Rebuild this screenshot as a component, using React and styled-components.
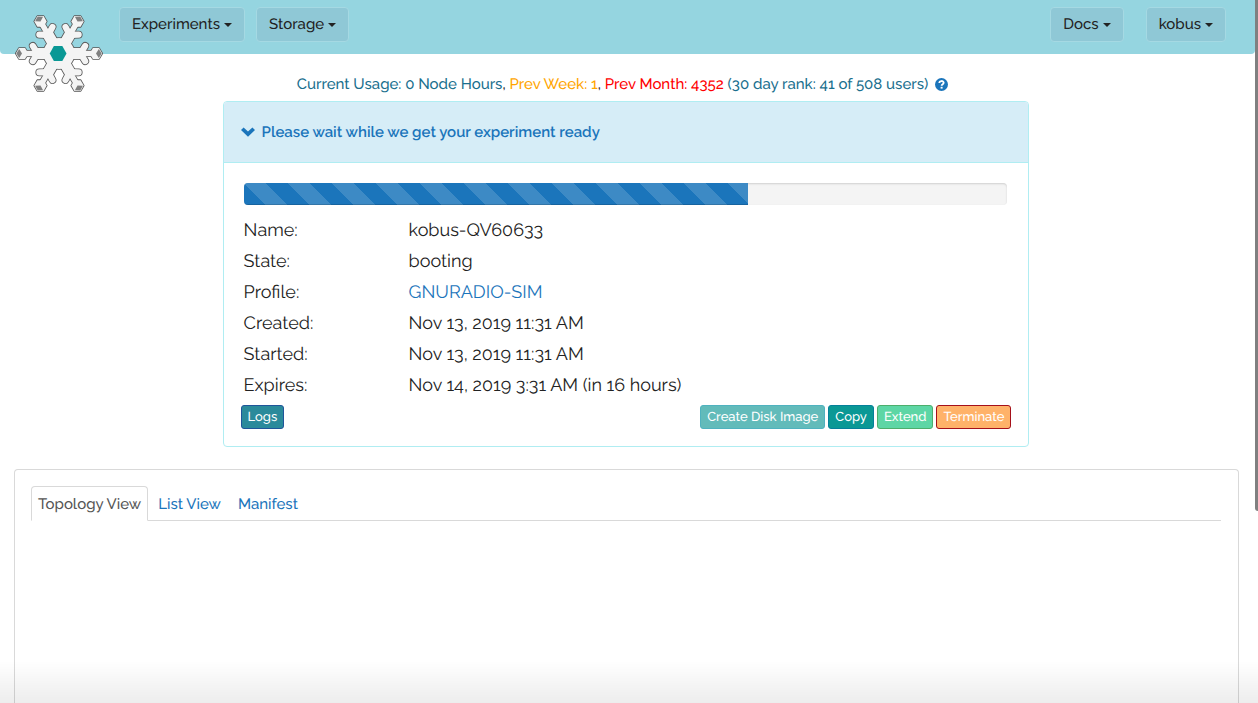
import React from "react";
import styled, { createGlobalStyle, css } from "styled-components";

const Global = createGlobalStyle`
  *, *::before, *::after { box-sizing: border-box; }
  body {
    margin: 0;
    background: #fff;
    color: #222;
    font-family: Raleway, Lato, "Open Sans", sans-serif;
    font-size: 15px;
    font-weight: 500;
    line-height: 22px;
    font-variant-numeric: oldstyle-nums;
    text-rendering: geometricPrecision;
  }
  a { color: #1b75bb; text-decoration: none; }
  button { font: inherit; text-rendering: inherit; cursor: pointer; }
`;

const Page = styled.div`
  min-height: 100vh;
  display: flex;
  flex-direction: column;
  padding-right: 3px;
`;

const Navbar = styled.nav`
  position: relative;
  display: flex;
  justify-content: space-between;
  height: 54px;
  padding: 7px 29px 0 119px;
  background: #95d5e0;
  border-radius: 0 0 4px 4px;
`;

const Logo = styled.a`
  position: absolute;
  left: 14px;
  top: 13px;
  svg { display: block; }
`;

const NavGroup = styled.div`
  display: flex;
  gap: ${(p) => p.$gap}px;
`;

const NavButton = styled.button`
  display: flex;
  align-items: center;
  gap: 4px;
  height: 35px;
  padding: 0 12px 2px;
  color: #222;
  background: #8fc8d6;
  border: 1px solid #a5d9e3;
  border-radius: 4px;
`;

const Caret = styled.span`
  margin-top: 2px;
  border-top: 4px solid currentColor;
  border-left: 4px solid transparent;
  border-right: 4px solid transparent;
`;

const Usage = styled.div`
  display: flex;
  justify-content: center;
  align-items: center;
  gap: 7px;
  margin-top: 19px;
  padding-right: 10px;
  color: #1a6f8e;
  svg { display: block; }
  a { display: block; }
`;

const Tone = styled.span`
  color: ${(p) => p.$color};
`;

const Column = styled.div`
  width: 66.6%;
  margin: 6px auto 0;
  padding: 0 16px 0 13px;
`;

const Panel = styled.section`
  border: 1px solid #b0edf2;
  border-radius: 4px;
`;

const PanelHeader = styled.h1`
  display: flex;
  align-items: center;
  height: 61px;
  margin: 0;
  padding: 0 17px;
  background: #d6edf7;
  border-bottom: 1px solid #b0edf2;
  border-radius: 3px 3px 0 0;
  font-size: 15px;
  font-weight: 600;
  a {
    display: flex;
    align-items: center;
    gap: 7px;
  }
`;

const PanelBody = styled.div`
  padding: 20px 21px 17px 20px;
`;

const Progress = styled.div`
  height: 22px;
  margin-bottom: 10px;
  overflow: hidden;
  background: #f4f4f4;
  border-radius: 4px;
  box-shadow: inset 0 1px 2px rgba(0, 0, 0, 0.15);
`;

const ProgressFill = styled.div`
  height: 100%;
  width: 66%;
  background-color: #1b75bb;
  background-image: linear-gradient(
    45deg,
    rgba(255, 255, 255, 0.15) 25%,
    transparent 25%,
    transparent 50%,
    rgba(255, 255, 255, 0.15) 50%,
    rgba(255, 255, 255, 0.15) 75%,
    transparent 75%,
    transparent
  );
  background-size: 44px 44px;
  box-shadow: inset 0 -1px 0 rgba(0, 0, 0, 0.15);
`;

const Details = styled.dl`
  display: grid;
  grid-template-columns: 165px 1fr;
  margin: 0;
  font-size: 18px;
  font-weight: 400;
  line-height: 31px;
  dd { margin: 0; }
`;

const Actions = styled.div`
  display: flex;
  justify-content: space-between;
  align-items: center;
  margin: 4px -4px 0 -3px;
`;

const ActionGroup = styled.div`
  display: flex;
  gap: 3px;
`;

const tones = {
  logs: ["#2b8a9b", "#20559a"],
  image: ["#62bbba", "#4fb2bf"],
  copy: ["#0a9895", "#05809a"],
  extend: ["#5dd6a5", "#4cae6c"],
  terminate: ["#ffb269", "#a5101a"],
};

const ActionButton = styled.button`
  height: 24px;
  padding: 2px 6px 0;
  color: #fff;
  font-size: 13px;
  line-height: 20px;
  border-radius: 3px;
  ${(p) => css`
    background: ${tones[p.$tone][0]};
    border: 1px solid ${tones[p.$tone][1]};
  `}
`;

const Card = styled.section`
  flex: 1;
  margin: 22px 16px 0 14px;
  padding: 16px 17px 0 16px;
  border: 1px solid #d9d9d9;
  border-bottom: 0;
  border-radius: 4px 4px 0 0;
`;

const Tabs = styled.div`
  display: flex;
  gap: 3px;
  border-bottom: 1px solid #d9d9d9;
`;

const Tab = styled.button`
  height: 35px;
  margin-bottom: -1px;
  padding: 0 6px;
  background: transparent;
  color: #1b75bb;
  border: 1px solid transparent;
  border-radius: 4px 4px 0 0;
  ${(p) =>
    p.$active &&
    css`
      color: #555;
      background: #fff;
      border-color: #d9d9d9 #d9d9d9 #fff;
    `}
`;

const BottomShade = styled.div`
  position: fixed;
  left: 0;
  right: 0;
  bottom: 0;
  height: 42px;
  pointer-events: none;
  background: linear-gradient(rgba(0, 0, 0, 0), rgba(0, 0, 0, 0.07));
`;

const ScrollThumb = styled.div`
  position: fixed;
  top: 0;
  right: 0;
  width: 3px;
  height: 73vh;
  max-height: 511px;
  background: #808080;
  border-bottom-left-radius: 3px;
`;

const ARMS = [0, 60, 120, 180, 240, 300];

function ArmShape({ color, grow }) {
  return (
    <g stroke={color} fill={color} strokeLinejoin="round">
      <path d="M0 0H24" strokeWidth={11 + grow} />
      <path d="M22 0H36" strokeWidth={5.5 + grow} />
      <path d="M21.5 0L26.2 7.6M21.5 0L26.2 -7.6" strokeWidth={6.2 + grow} strokeLinecap="round" fill="none" />
      <path d="M43.2 0L40.1 5.4H33.9L30.8 0L33.9 -5.4H40.1Z" strokeWidth={grow} />
    </g>
  );
}

function Snowflake() {
  const layer = (color, grow) =>
    ARMS.map((a) => (
      <g key={color + a} transform={`rotate(${a})`}>
        <ArmShape color={color} grow={grow} />
      </g>
    ));
  return (
    <svg width="90" height="80" viewBox="-45 -40.5 90 80" aria-hidden="true">
      {layer("#555", 1.6)}
      <circle r="16.3" fill="#555" />
      {layer("#f4f4f4", 0)}
      <circle r="15.5" fill="#f4f4f4" />
      {ARMS.map((a) => (
        <path key={a} transform={`rotate(${a})`} d="M37 0L39.8 -4.6L42.6 0L39.8 4.6Z" fill="#808080" />
      ))}
      <path d="M7.5 0L3.3 7.4H-5.1L-9.3 0L-5.1 -7.4H3.3Z" fill="#0a9895" />
    </svg>
  );
}

function MenuButton({ children }) {
  return (
    <NavButton type="button" aria-haspopup="menu">
      {children}
      <Caret />
    </NavButton>
  );
}

const details = [
  ["Name:", "kobus-QV60633"],
  ["State:", "booting"],
  ["Profile:", <a href="#profile">GNURADIO-SIM</a>],
  ["Created:", "Nov 13, 2019 11:31 AM"],
  ["Started:", "Nov 13, 2019 11:31 AM"],
  ["Expires:", "Nov 14, 2019 3:31 AM (in 16 hours)"],
];

export default function App() {
  return (
    <Page>
      <Global />
      <Navbar>
        <Logo href="#home" aria-label="Home">
          <Snowflake />
        </Logo>
        <NavGroup $gap={11}>
          <MenuButton>Experiments</MenuButton>
          <MenuButton>Storage</MenuButton>
        </NavGroup>
        <NavGroup $gap={22}>
          <MenuButton>Docs</MenuButton>
          <MenuButton>kobus</MenuButton>
        </NavGroup>
      </Navbar>

      <Usage>
        <span>
          Current Usage: 0 Node Hours<Tone $color="#333">,</Tone>{" "}
          <Tone $color="#ffa500">Prev Week: 1</Tone>
          <Tone $color="#333">,</Tone> <Tone $color="#f00">Prev Month: 4352</Tone>{" "}
          (30 day rank: 41 of 508 users)
        </span>
        <a href="#usage-help" aria-label="Usage help">
          <svg width="13" height="13" viewBox="0 0 13 13">
            <circle cx="6.5" cy="6.5" r="6.5" fill="#1b75bb" />
            <path
              d="M4.3 5C4.3 2.4 8.7 2.4 8.7 4.8C8.7 6.2 6.6 6.1 6.6 7.8"
              fill="none"
              stroke="#fff"
              strokeWidth="1.8"
            />
            <path d="M5.6 8.8H7.6V10.6H5.6Z" fill="#fff" />
          </svg>
        </a>
      </Usage>

      <Column>
        <Panel>
          <PanelHeader>
            <a href="#status">
              <svg width="14" height="10" viewBox="0 0 14 10" aria-hidden="true">
                <path d="M0 3L2.6 0.4L7 4.6L11.4 0.4L14 3L7 9.8Z" fill="#1b75bb" />
              </svg>
              Please wait while we get your experiment ready
            </a>
          </PanelHeader>
          <PanelBody>
            <Progress role="progressbar" aria-valuenow={66} aria-valuemin={0} aria-valuemax={100}>
              <ProgressFill />
            </Progress>
            <Details>
              {details.map(([label, value]) => (
                <React.Fragment key={label}>
                  <dt>{label}</dt>
                  <dd>{value}</dd>
                </React.Fragment>
              ))}
            </Details>
            <Actions>
              <ActionButton type="button" $tone="logs">Logs</ActionButton>
              <ActionGroup>
                <ActionButton type="button" $tone="image">Create Disk Image</ActionButton>
                <ActionButton type="button" $tone="copy">Copy</ActionButton>
                <ActionButton type="button" $tone="extend">Extend</ActionButton>
                <ActionButton type="button" $tone="terminate">Terminate</ActionButton>
              </ActionGroup>
            </Actions>
          </PanelBody>
        </Panel>
      </Column>

      <Card>
        <Tabs role="tablist">
          <Tab type="button" role="tab" aria-selected="true" $active>Topology View</Tab>
          <Tab type="button" role="tab" aria-selected="false">List View</Tab>
          <Tab type="button" role="tab" aria-selected="false">Manifest</Tab>
        </Tabs>
      </Card>
      <BottomShade />
      <ScrollThumb />
    </Page>
  );
}
